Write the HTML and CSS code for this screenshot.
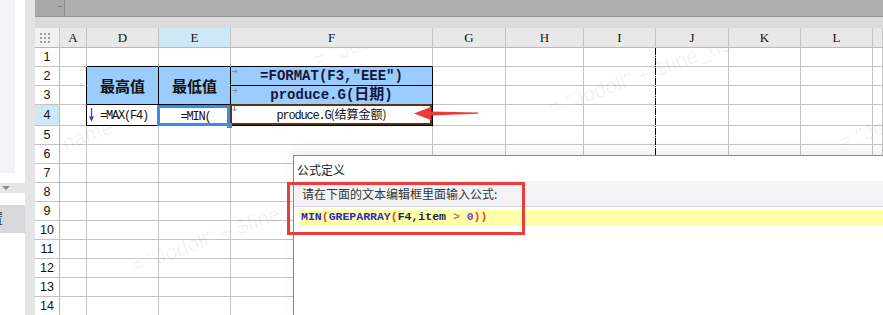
FILE: index.html
```html
<!DOCTYPE html>
<html lang="zh-CN">
<head>
    <meta charset="UTF-8">
    <title>公式定义</title>
    <link rel="stylesheet" href="styles.css">
</head>
<body>
    <div class="app">
        <aside class="side">
            <div class="side-top"></div>
            <div class="side-gap"></div>
            <div class="side-drop"><span class="tri"></span></div>
            <div class="side-gap2"></div>
            <div class="side-item"><span>置</span></div>
        </aside>
        <div class="gutter"></div>
        <div class="work">
            <div class="toolbar">
                <div class="tb-left"><span class="tb-dash"></span></div>
            </div>
            <div class="strip"></div>
            <div class="sheet">
                <table class="grid">
                    <colgroup>
                        <col class="c-hdr"><col class="c-a"><col class="c-72"><col class="c-72"><col class="c-f">
                        <col class="c-73"><col class="c-78"><col class="c-72"><col class="c-73"><col class="c-72"><col class="c-72"><col>
                    </colgroup>
                    <thead>
                        <tr class="hdr">
                            <th class="corner">
                                <svg width="10" height="10" viewBox="0 0 10 10"><g fill="#9c9c9c"><rect x="0" y="0" width="2" height="2"/><rect x="4" y="0" width="2" height="2"/><rect x="8" y="0" width="2" height="2"/><rect x="0" y="4" width="2" height="2"/><rect x="4" y="4" width="2" height="2"/><rect x="8" y="4" width="2" height="2"/><rect x="0" y="8" width="2" height="2"/><rect x="4" y="8" width="2" height="2"/><rect x="8" y="8" width="2" height="2"/></g></svg>
                            </th>
                            <th>A</th><th>D</th><th class="sel">E</th><th>F</th><th>G</th><th>H</th><th>I</th><th>J</th><th>K</th><th>L</th><th></th>
                        </tr>
                    </thead>
                    <tbody>
                        <tr><th>1</th><td></td><td class="top"></td><td class="top"></td><td class="top"></td><td></td><td></td><td></td><td></td><td></td><td></td><td></td></tr>
                        <tr>
                            <th>2</th><td class="left"></td>
                            <td class="title" rowspan="2">最高值</td>
                            <td class="title" rowspan="2">最低值</td>
                            <td class="fx"><svg class="mark" width="6" height="5" viewBox="0 0 6 5"><path d="M0 2.5H5M3 0.5L5 2.5L3 4.5" stroke="#8a8a8a" fill="none"/></svg>=FORMAT(F3,"EEE")</td>
                            <td></td><td></td><td></td><td></td><td></td><td></td><td></td>
                        </tr>
                        <tr>
                            <th>3</th><td class="left"></td>
                            <td class="fx"><svg class="mark" width="6" height="5" viewBox="0 0 6 5"><path d="M0 2.5H5M3 0.5L5 2.5L3 4.5" stroke="#8a8a8a" fill="none"/></svg>produce.G(<span class="cjk">日期</span>)</td>
                            <td></td><td></td><td></td><td></td><td></td><td></td><td></td>
                        </tr>
                        <tr>
                            <th class="sel">4</th><td class="left"></td>
                            <td class="d4"><svg width="5" height="14" viewBox="0 0 5 14"><path d="M2.5 0V10" stroke="#2443d6" stroke-width="1.2"/><path d="M0 8.5H5L2.5 13.5Z" fill="#2443d6"/></svg><span class="ss">=MAX(F4)</span></td>
                            <td class="e4"><span class="ss">=MIN(</span><span class="handle"></span></td>
                            <td class="f4"><svg class="mark" width="5" height="6" viewBox="0 0 5 6"><path d="M2.5 0V5M0.5 3L2.5 5L4.5 3" stroke="#8a8a8a" fill="none"/></svg><span class="ss">produce.G</span>(结算金额)</td>
                            <td></td><td></td><td></td><td></td><td></td><td></td><td></td>
                        </tr>
                        <tr><th>5</th><td></td><td></td><td></td><td></td><td></td><td></td><td></td><td></td><td></td><td></td><td></td></tr>
                        <tr><th>6</th><td></td><td></td><td></td><td></td><td></td><td></td><td></td><td></td><td></td><td></td><td></td></tr>
                        <tr><th>7</th><td></td><td></td><td></td><td></td><td></td><td></td><td></td><td></td><td></td><td></td><td></td></tr>
                        <tr><th>8</th><td></td><td></td><td></td><td></td><td></td><td></td><td></td><td></td><td></td><td></td><td></td></tr>
                        <tr><th>9</th><td></td><td></td><td></td><td></td><td></td><td></td><td></td><td></td><td></td><td></td><td></td></tr>
                        <tr><th>10</th><td></td><td></td><td></td><td></td><td></td><td></td><td></td><td></td><td></td><td></td><td></td></tr>
                        <tr><th>11</th><td></td><td></td><td></td><td></td><td></td><td></td><td></td><td></td><td></td><td></td><td></td></tr>
                        <tr><th>12</th><td></td><td></td><td></td><td></td><td></td><td></td><td></td><td></td><td></td><td></td><td></td></tr>
                        <tr><th>13</th><td></td><td></td><td></td><td></td><td></td><td></td><td></td><td></td><td></td><td></td><td></td></tr>
                        <tr><th>14</th><td></td><td></td><td></td><td></td><td></td><td></td><td></td><td></td><td></td><td></td><td></td></tr>
                    </tbody>
                </table>

                <!-- watermark text drawn over the cell area -->
                <div class="wm">
                    <span class="wm-a">= "Jodoll" + $fine_username</span>
                    <span class="wm-b">= "Jodoll" + $fine_username</span>
                    <span class="wm-c">= "Jodoll" + $fine_username</span>
                    <span class="wm-d">= "Jodoll" + $fine_username</span>
                    <span class="wm-e">= "Jodoll" + $fine_username</span>
                </div>

                <div class="pagebreak"></div>

                <svg class="pointer" width="68" height="20" viewBox="0 0 68 20">
                    <path d="M2 9.5L20 2.5Q18 6.5 19 7.5L66 8.4L66 9.8L19 11.5Q18 12.5 20 16.5Z" fill="#ec3b3b"/>
                </svg>
            </div>
        </div>
    </div>

    <div class="dialog">
        <div class="dlg-title">公式定义</div>
        <div class="dlg-prompt">请在下面的文本编辑框里面输入公式:</div>
        <div class="dlg-editor"><code><span class="k">MIN</span><span class="p">(</span><span class="k">GREPARRAY</span><span class="p">(</span><span class="v">F4,item</span> <span class="o">&gt;</span> <span class="n">0</span><span class="p">))</span></code></div>
    </div>
    <div class="callout"></div>
</body>
</html>
```

FILE: styles.css
```css
* {
    box-sizing: border-box;
}
body {
    margin: 0;
    width: 883px;
    height: 315px;
    overflow: hidden;
    position: relative;
    background: #fff;
    font-family: "Liberation Sans", "Noto Sans CJK SC", sans-serif;
}
.app {
    display: flex;
    height: 315px;
}

/* left panel */
.side {
    width: 25px;
    flex: none;
    display: flex;
    flex-direction: column;
}
.side-top {
    height: 173px;
    background: linear-gradient(to right, #f3f3f5 15px, #fff 15px);
}
.side-gap {
    height: 10px;
}
.side-drop {
    height: 10px;
    background: #e6e6e8;
    display: flex;
    align-items: center;
    padding-left: 2px;
}
.tri {
    width: 0;
    height: 0;
    border-left: 4px solid transparent;
    border-right: 4px solid transparent;
    border-top: 4px solid #8c8c8c;
}
.side-gap2 {
    height: 12px;
}
.side-item {
    height: 28px;
    background: #d9d9dd;
    overflow: hidden;
    font-size: 13px;
    line-height: 28px;
    color: #333;
    white-space: nowrap;
}
.side-item span {
    display: inline-block;
    margin-left: -10px;
}
.gutter {
    width: 10px;
    flex: none;
    background: #e4e4e4;
}

/* sheet */
.work {
    flex: 1;
    min-width: 0;
    display: flex;
    flex-direction: column;
}
.toolbar {
    height: 17px;
    flex: none;
    display: flex;
    background: #afafaf;
    border-bottom: 1px solid #939393;
}
.tb-left {
    width: 30px;
    background: #a8a8a8;
    border-right: 1px solid #8a8a8a;
    display: flex;
    justify-content: flex-end;
}
.tb-dash {
    width: 4px;
    height: 1px;
    margin: 6px 2px 0 0;
    background: #777;
}
.strip {
    height: 11px;
    flex: none;
    background: #dbdbdb;
}
.sheet {
    position: relative;
    flex: 1;
    overflow: hidden;
}
.grid {
    border-collapse: separate;
    border-spacing: 0;
    table-layout: fixed;
    width: 848px;
}
.c-hdr { width: 25px; }
.c-a { width: 27px; }
.c-72 { width: 72px; }
.c-73 { width: 73px; }
.c-78 { width: 78px; }
.c-f { width: 202px; }
.grid tr {
    height: 19px;
}
.grid tr.hdr {
    height: 20px;
}
.grid th,
.grid td {
    padding: 0;
    border-right: 1px solid #c4c4c4;
    border-bottom: 1px solid #c4c4c4;
    white-space: nowrap;
    overflow: hidden;
    line-height: 16px;
}
.grid thead th {
    background: #e8e8e8;
    border-bottom-color: #b8b8b8;
    font: 13px/16px "Liberation Serif", serif;
    color: #111;
}
.grid thead th.corner {
    background: #f1f1f1;
    padding-right: 5px;
    line-height: 0;
}
.grid tbody th {
    background: #fff;
    border-right-color: #b8b8b8;
    font: 12.5px/16px "Liberation Sans", sans-serif;
    color: #111;
}
.grid .sel,
.grid tbody th.sel {
    background: #cde8f6;
}
.grid td.top {
    border-bottom-color: #000;
}
.grid td.left {
    border-right-color: #000;
}
.grid td.title,
.grid td.fx,
.grid td.d4,
.grid td.e4,
.grid td.f4 {
    border-right-color: #000;
    border-bottom-color: #000;
    position: relative;
}
.grid td.title {
    background: #99ccff;
    text-align: center;
    font: bold 15px/20px "Noto Sans CJK SC", sans-serif;
    color: #111;
}
.grid td.fx {
    background: #99ccff;
    text-align: center;
    font: bold 14px/16px "Liberation Mono", "Noto Sans CJK SC", monospace;
    color: #15153a;
}
.fx .cjk {
    font-size: 15px;
}
.mark {
    position: absolute;
    left: 1px;
    top: 2px;
}
.ss {
    font-family: "Liberation Mono", monospace;
    letter-spacing: -1.2px;
}
.grid td.d4,
.grid td.e4,
.grid td.f4 {
    font: 12px/16px "Noto Sans CJK SC", sans-serif;
    color: #111;
}
.grid td.d4 {
    padding-left: 2px;
}
.d4 svg {
    vertical-align: -3px;
    margin-right: 6px;
}
.grid td.e4,
.grid td.f4 {
    text-align: center;
}
.grid td.e4 {
    overflow: visible;
    padding-left: 2px;
    vertical-align: top;
    padding-top: 2px;
}
.e4::after {
    content: "";
    position: absolute;
    left: -2px;
    top: 0;
    right: 0;
    bottom: -1px;
    border: 3px solid #3d8be6;
}
.handle {
    position: absolute;
    right: -2px;
    bottom: -3px;
    width: 5px;
    height: 5px;
    background: #3d8be6;
    z-index: 1;
}
.grid td.f4 {
    overflow: visible;
}
.f4::after {
    content: "";
    position: absolute;
    left: -1px;
    top: -1px;
    right: 0;
    bottom: 0;
    border: 2px solid #5b3414;
}
.f4 .mark {
    top: 1px;
}

/* watermark */
.wm {
    position: absolute;
    left: 25px;
    top: 20px;
    right: 0;
    bottom: 0;
    overflow: hidden;
    pointer-events: none;
}
.wm span {
    position: absolute;
    font: 21px "Liberation Sans", sans-serif;
    line-height: 21px;
    color: rgba(0, 0, 0, 0.06);
    white-space: nowrap;
    transform: rotate(-20deg);
    transform-origin: 0 100%;
}
.wm-a { left: 493px; top: 49px; }
.wm-b { left: 75px; top: 207px; }
.wm-c { left: 258px; top: 1px; }
.wm-d { left: 783px; top: 83px; }
.wm-e { left: -191px; top: 156px; }

.pagebreak {
    position: absolute;
    left: 620px;
    top: 20px;
    bottom: 0;
    width: 1px;
    background: repeating-linear-gradient(to bottom, #000 0 7px, transparent 7px 8px, #000 8px 9px, transparent 9px 10px);
}
.pointer {
    position: absolute;
    left: 377px;
    top: 76px;
}

/* formula dialog */
.dialog {
    position: absolute;
    left: 293px;
    top: 155px;
    right: -10px;
    bottom: -10px;
    background: #fff;
    border-left: 1px solid #8c8c8c;
    border-top: 1px solid #8c8c8c;
    box-shadow: 0 -6px 10px rgba(0, 0, 0, 0.06);
    font-family: "Noto Sans CJK SC", sans-serif;
}
.dlg-title {
    height: 25px;
    padding: 2px 0 0 3px;
    font-size: 12px;
    line-height: 23px;
    color: #222;
}
.dlg-prompt {
    height: 26px;
    padding-left: 8px;
    background: #f3f3f5;
    border-bottom: 1px solid #d4d4d8;
    font-size: 12px;
    line-height: 25px;
    color: #333;
}
.dlg-editor {
    height: 16px;
    margin: 3px 0 0 5px;
    padding-left: 2px;
    background: #ffffaa;
}
.dlg-editor code {
    display: block;
    font: bold 11.5px "Liberation Mono", monospace;
    line-height: 13px;
    white-space: pre;
}
.dlg-editor .k { color: #2b2bc8; }
.dlg-editor .p { color: #e8453c; }
.dlg-editor .v { color: #1e1e3c; }
.dlg-editor .o { color: #a38361; }
.dlg-editor .n { color: #8a3cc8; }

.callout {
    position: absolute;
    left: 287px;
    top: 182px;
    width: 238px;
    height: 53px;
    border: 3px solid #ec3b3b;
}
```
